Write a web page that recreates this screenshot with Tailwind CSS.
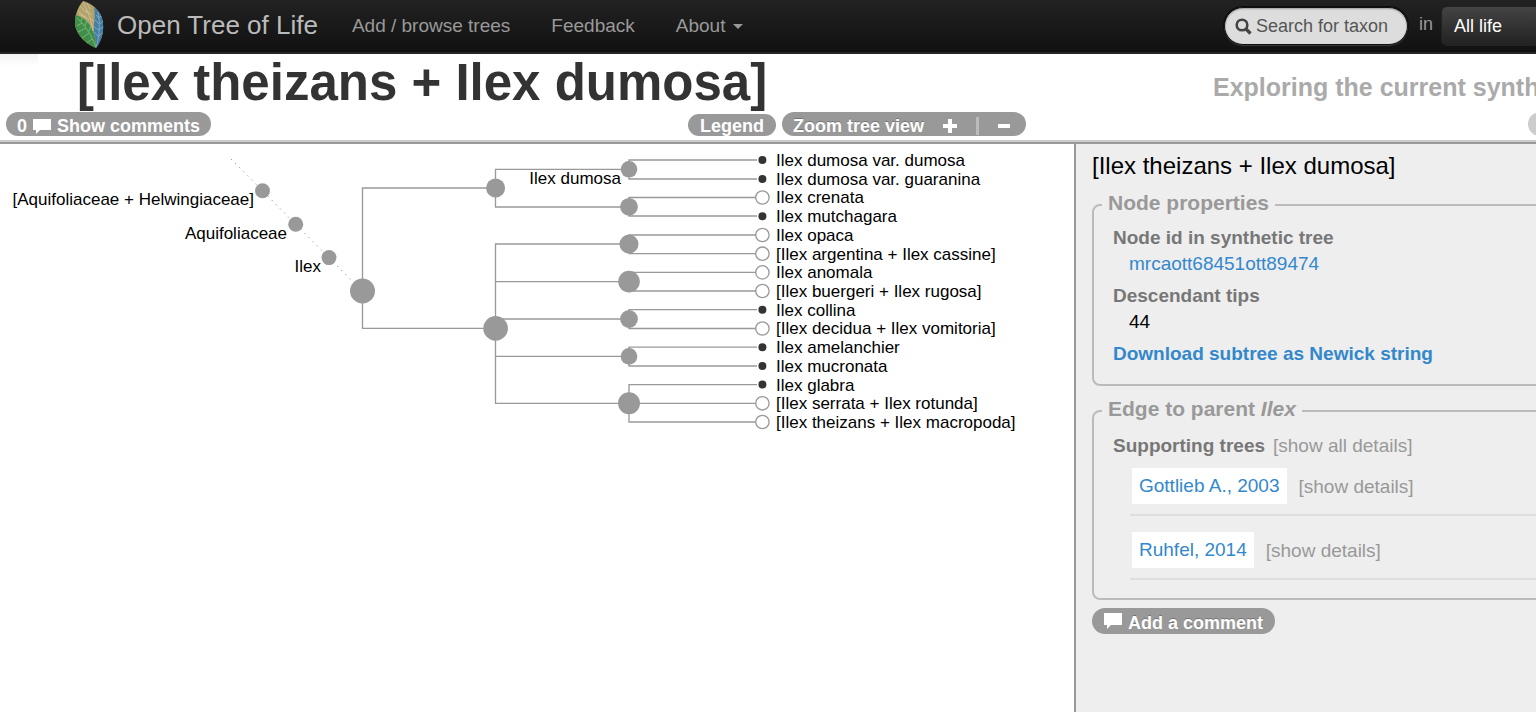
<!DOCTYPE html>
<html lang="en">
<head>
<meta charset="utf-8">
<title>Open Tree of Life</title>
<meta name="viewport" content="width=device-width, initial-scale=1">
<script src="https://cdn.jsdelivr.net/npm/@tailwindcss/browser@4"></script>
</head>
<body class="flex h-screen flex-col overflow-hidden bg-white font-['Liberation_Sans',Arial,sans-serif] text-black">

<nav class="flex shrink-0 items-center overflow-hidden border-b-2 border-[#252525] bg-linear-to-b from-[#222] to-[#111] text-[19px] text-[#999]">
  <a href="#" class="flex h-[52px] shrink-0 items-center gap-3 pb-0.5 pl-[74px] text-[26px] text-[#bbb]">
    <svg width="31" height="50" viewBox="0 0 31 50" aria-hidden="true">
      <path d="M9 1C18 3 25 10 28 18C31 30 28 40 22 48C12 44 4 36 1.500 27C0 17 3 8 9 1Z" fill="#b3a26c"/>
      <path d="M1.500 15C10 17 17 24 20 34Q22 40 22 48C12 44 4 36 1.500 27Q0.500 20 1.500 15Z" fill="#3f8f48"/>
      <path d="M20 7C24 10 27 14 28 18C31 30 28 40 22 48C22 41 21 37 20 34C19 27 22 17 20 7Z" fill="#457ea4"/>
      <path d="M9 2C12 9 17 17 19 31M4 11L15 20M6 6L13 13M13 3L16 9M12 10L18 15M16 18L20 22M5 14L12 18" fill="none" stroke="#d3c898" stroke-width=".8"/>
      <path d="M3 18C10 24 17 34 22 47M3 26L8 23M4 32L12 28M8 38L15 33M13 43L18 39M7 21L8 18M11 26L13 21M15 31L17 26" fill="none" stroke="#86bd88" stroke-width=".8"/>
      <path d="M24 12C26 22 26 35 22 47M25 18L22 15M25 24L21 20M25 30L20 27M24 36L20 32M25 18L27 16M26 24L29 21M25 30L29 27M24 37L28 33" fill="none" stroke="#86b0ca" stroke-width=".8"/>
    </svg>
    Open Tree of Life
  </a>
  <div class="ml-[34px] flex shrink-0 items-center gap-[41px] pt-px">
    <a href="#">Add / browse trees</a>
    <a href="#">Feedback</a>
    <a href="#" class="flex items-center gap-2">About
      <svg width="10" height="5" viewBox="0 0 10 5" aria-hidden="true"><path d="M0 0H10L5 5Z" fill="#999"/></svg>
    </a>
  </div>
  <form class="ml-auto flex w-[312px] shrink-0 items-center text-[18px]">
    <label class="flex h-[38px] w-[184px] shrink-0 items-center gap-1 rounded-full border border-[#111] bg-[#ddd] pl-2.5 text-[#555] shadow-[inset_0_1px_2px_rgba(0,0,0,0.3),0_1px_1px_rgba(255,255,255,0.2),0_0_0_1px_#0c0c0c]">
      <svg width="17" height="17" viewBox="0 0 17 17" fill="none" stroke="#444" aria-hidden="true"><circle cx="7" cy="7" r="5.300" stroke-width="2.600"/><path d="M10.500 10.500L15.500 15.500" stroke-width="3.200"/></svg>
      <input type="text" aria-label="Search for taxon" placeholder="Search for taxon" class="w-36 bg-transparent outline-none placeholder:text-[#555]">
    </label>
    <label for="ctx" class="ml-[11px] shrink-0 pb-1">in</label>
    <select id="ctx" class="ml-2 h-10 w-48 shrink-0 appearance-none rounded-md border border-[#222] bg-linear-to-b from-[#444] to-[#222] px-3 text-white">
      <option>All life</option>
    </select>
  </form>
</nav>

<header class="relative shrink-0 border-b-2 border-[#999]">
  <div class="absolute left-0 top-0 h-3 w-[38px] bg-linear-to-b from-black/5 to-transparent"></div>
  <div class="border-b-2 border-[#ccc] pb-1">
    <div class="flex h-[58px] justify-between overflow-hidden whitespace-nowrap">
      <h1 class="pl-[77px] text-[51px] font-bold leading-[58px] text-[#333]">[Ilex theizans + Ilex dumosa]</h1>
      <p class="w-[323px] shrink-0 pt-1 text-[25px] font-bold leading-[58px] text-[#aaa]">Exploring the current synthetic tree</p>
    </div>
    <div class="flex h-6 overflow-hidden text-[18px] font-bold text-white text-shadow-[0_-1px_0_rgba(0,0,0,0.25)]">
      <div class="flex flex-1 items-end gap-1.5 pl-1.5 pr-12">
        <button class="mr-auto flex h-6 items-center gap-1 rounded-full bg-[#999] px-[11px] pt-1">0
          <svg class="mx-0.5" width="18" height="15" viewBox="0 0 18 15" aria-hidden="true"><path d="M0 0H18V11H7L3 15V11H0Z" fill="#fff"/></svg>
          Show comments</button>
        <button class="flex h-[22px] items-center rounded-full bg-[#999] px-3 pt-0.5">Legend</button>
        <div class="flex h-6 w-[244px] items-center rounded-full bg-[#999] px-[11px]">
          <span class="pt-1">Zoom tree view</span>
          <button aria-label="Zoom in" class="ml-auto mt-1"><svg width="14" height="14" viewBox="0 0 14 14" aria-hidden="true"><path d="M7 0V14M0 7H14" stroke="#fff" stroke-width="4"/></svg></button>
          <span class="ml-[19px] mt-1 h-[18px] w-[3px] bg-[#bbb]"></span>
          <button aria-label="Zoom out" class="ml-[19px] mr-[5px] mt-1"><svg width="12" height="14" viewBox="0 0 12 14" aria-hidden="true"><path d="M0 7H12" stroke="#fff" stroke-width="4"/></svg></button>
        </div>
      </div>
      <div class="flex w-[462px] shrink-0 overflow-hidden pl-[454px]">
        <button aria-label="Hide properties" class="h-6 w-20 shrink-0 rounded-full bg-[#ccc]"></button>
      </div>
    </div>
  </div>
</header>

<div class="flex min-h-0 flex-1">
  <main class="min-w-0 flex-1 overflow-hidden">
    <svg width="1074" height="300" viewBox="0 144 1074 300" role="img" aria-label="Synthetic tree">
      <path d="M231 159L362 291" stroke="#999" stroke-dasharray="1.300 4.500" fill="none"/>
      <g fill="none" stroke="#999" stroke-width="1.330">
        <path d="M496 188H362.500V328.300H496"/>
        <path d="M629 169.300H495.500V207H629"/>
        <path d="M629 244H495.500V403.300H629M495.500 281.600H629M495.500 319H629M495.500 356.300H629"/>
        <path d="M757 160H629V179H757M757 197.500H629V216H757M757 235H629V253.700H757M757 272.300H629V291H757M757 309.700H629V328.500H757M757 347.200H629V366H757M757 384.600H629V422H757M629 403.300H757"/>
      </g>
      <g fill="#999">
        <circle cx="262.500" cy="190.700" r="7.500"/><circle cx="295.700" cy="224.200" r="7.500"/><circle cx="329" cy="257.600" r="7.500"/>
        <circle cx="362.500" cy="291" r="12.500"/>
        <circle cx="495.600" cy="188" r="9.500"/><circle cx="495.600" cy="328.400" r="12.300"/>
        <circle cx="629" cy="169.300" r="8.300"/><circle cx="629" cy="206.800" r="8.900"/><circle cx="629" cy="244.100" r="9.500"/>
        <circle cx="629" cy="281.600" r="10.800"/><circle cx="629" cy="319" r="8.900"/><circle cx="629" cy="356.400" r="8.300"/><circle cx="629" cy="403.200" r="11"/>
      </g>
      <g fill="#333">
        <circle cx="762.400" cy="160" r="4"/><circle cx="762.400" cy="179" r="4"/><circle cx="762.400" cy="216.200" r="4"/><circle cx="762.400" cy="309.800" r="4"/>
        <circle cx="762.400" cy="347.200" r="4"/><circle cx="762.400" cy="366" r="4"/><circle cx="762.400" cy="384.600" r="4"/>
      </g>
      <g fill="#fff" stroke="#999" stroke-width="1.330">
        <circle cx="762.400" cy="197.500" r="6.700"/><circle cx="762.400" cy="235" r="6.700"/><circle cx="762.400" cy="253.700" r="6.700"/><circle cx="762.400" cy="272.400" r="6.700"/>
        <circle cx="762.400" cy="291" r="6.700"/><circle cx="762.400" cy="328.500" r="6.700"/><circle cx="762.400" cy="403.300" r="6.700"/><circle cx="762.400" cy="422" r="6.700"/>
      </g>
      <g class="text-[17px]" text-anchor="end">
        <text x="254" y="205">[Aquifoliaceae + Helwingiaceae]</text>
        <text x="287" y="239">Aquifoliaceae</text>
        <text x="321" y="272">Ilex</text>
        <text x="621" y="184">Ilex dumosa</text>
      </g>
      <g class="text-[17px]">
        <text x="776" y="166">Ilex dumosa var. dumosa</text>
        <text x="776" y="185">Ilex dumosa var. guaranina</text>
        <text x="776" y="203">Ilex crenata</text>
        <text x="776" y="222">Ilex mutchagara</text>
        <text x="776" y="241">Ilex opaca</text>
        <text x="776" y="260">[Ilex argentina + Ilex cassine]</text>
        <text x="776" y="278">Ilex anomala</text>
        <text x="776" y="297">[Ilex buergeri + Ilex rugosa]</text>
        <text x="776" y="316">Ilex collina</text>
        <text x="776" y="334">[Ilex decidua + Ilex vomitoria]</text>
        <text x="776" y="353">Ilex amelanchier</text>
        <text x="776" y="372">Ilex mucronata</text>
        <text x="776" y="391">Ilex glabra</text>
        <text x="776" y="409">[Ilex serrata + Ilex rotunda]</text>
        <text x="776" y="428">[Ilex theizans + Ilex macropoda]</text>
      </g>
    </svg>
  </main>

  <aside class="w-[462px] shrink-0 overflow-hidden border-l-2 border-[#999] bg-[#eee] pl-4 text-[19px] leading-[26px]">
    <h2 class="pt-1.5 text-[24px] leading-8">[Ilex theizans + Ilex dumosa]</h2>

    <fieldset class="-mr-8 mt-[11px] rounded-lg border-2 border-[#bbb] pb-[17px] pl-2">
      <legend class="px-1.5 pb-1 text-[21px] font-bold leading-5 text-[#999]">Node properties</legend>
      <dl class="pl-[11px] pt-2">
        <dt class="font-bold text-[#777]">Node id in synthetic tree</dt>
        <dd class="pl-4"><a href="#" class="text-[#38c]">mrcaott68451ott89474</a></dd>
        <dt class="mt-1.5 font-bold text-[#777]">Descendant tips</dt>
        <dd class="pl-4">44</dd>
      </dl>
      <p class="mt-1.5 pl-[11px]"><a href="#" class="font-bold text-[#38c]">Download subtree as Newick string</a></p>
    </fieldset>

    <fieldset class="-mr-8 mt-[13px] rounded-lg border-2 border-[#bbb] pb-[18px] pl-2">
      <legend class="px-1.5 pb-1 text-[21px] font-bold leading-5 text-[#999]">Edge to parent <em>Ilex</em></legend>
      <div class="flex gap-2 pl-[11px] pt-[10px]">
        <h3 class="font-bold text-[#777]">Supporting trees</h3>
        <a href="#" class="text-[#999]">[show all details]</a>
      </div>
      <ul class="flex flex-col gap-4 pl-7 pt-[9px]">
        <li class="flex items-center gap-3 border-b-2 border-[#ddd] pb-[10px] pl-0.5">
          <a href="#" class="bg-white px-[7px] py-[5px] text-[#38c]">Gottlieb A., 2003</a>
          <a href="#" class="pt-0.5 text-[#999]">[show details]</a>
        </li>
        <li class="flex items-center gap-3 border-b-2 border-[#ddd] pb-[10px] pl-0.5">
          <a href="#" class="bg-white px-[7px] py-[5px] text-[#38c]">Ruhfel, 2014</a>
          <a href="#" class="pt-0.5 text-[#999]">[show details]</a>
        </li>
      </ul>
    </fieldset>

    <button class="mt-2 flex h-[26px] items-center gap-1.5 rounded-full bg-[#999] px-3 text-[18px] font-bold text-white text-shadow-[0_-1px_0_rgba(0,0,0,0.25)]">
      <svg width="18" height="16" viewBox="0 0 18 16" aria-hidden="true"><path d="M0 0H18V12H7L3 16V12H0Z" fill="#fff"/></svg>
      <span class="pt-1">Add a comment</span>
    </button>
  </aside>
</div>
</body>
</html>
